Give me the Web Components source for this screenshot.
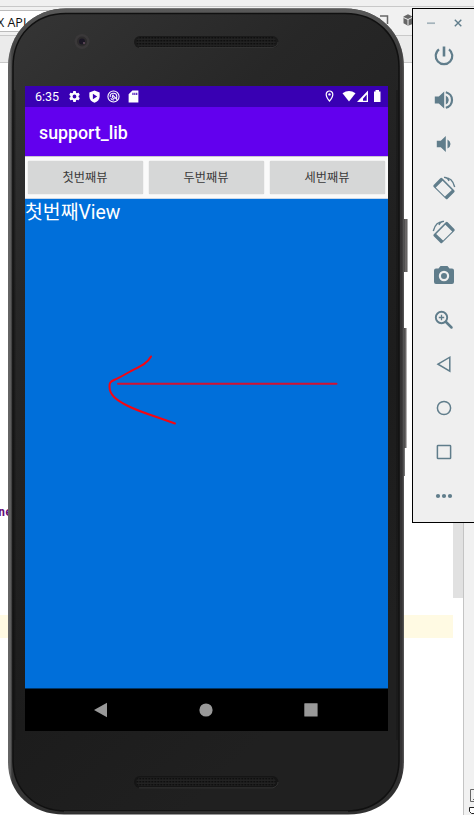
<!DOCTYPE html>
<html lang="ko">
<head>
<meta charset="utf-8">
<title>support_lib</title>
<style>
html,body{margin:0;height:100%;overflow:hidden;background:#fff}
body{font-family:Roboto,"Noto Sans CJK KR",sans-serif}
</style>
</head>
<body>
<desk-top>
  <ide-window slot="back"></ide-window>
  <phone-frame>
    <status-bar>6:35</status-bar>
    <app-bar>support_lib</app-bar>
    <button-row>
      <app-button>첫번째뷰</app-button>
      <app-button>두번째뷰</app-button>
      <app-button>세번째뷰</app-button>
    </button-row>
    <paint-view>첫번째View</paint-view>
    <nav-bar></nav-bar>
  </phone-frame>
  <emulator-panel slot="panel">
    <tool-icon name="power"></tool-icon>
    <tool-icon name="louder"></tool-icon>
    <tool-icon name="quieter"></tool-icon>
    <tool-icon name="left"></tool-icon>
    <tool-icon name="right"></tool-icon>
    <tool-icon name="camera"></tool-icon>
    <tool-icon name="zoom"></tool-icon>
    <tool-icon name="back"></tool-icon>
    <tool-icon name="home"></tool-icon>
    <tool-icon name="recent"></tool-icon>
    <tool-icon name="more"></tool-icon>
  </emulator-panel>
</desk-top>
<script>
function define(name, html) {
  customElements.define(name, class extends HTMLElement {
    constructor() {
      super();
      this.attachShadow({mode: "open"}).innerHTML = html;
    }
  });
}

// Overlapping windows placed on the desktop.
define("desk-top", `<style>
:host{display:block;position:relative;width:474px;height:815px;overflow:hidden}
::slotted(*){position:absolute}
.phone{position:absolute;left:8px;top:8px}
</style><slot name="back"></slot><div class="phone"><slot></slot></div><slot name="panel"></slot>`);

define("ide-window", `<style>
:host{display:flex;flex-direction:column;left:0;top:0;width:474px;height:815px;background:#fff;font:12px "Open Sans","Noto Sans",sans-serif;color:#111}
*{box-sizing:border-box}
.menu{height:7px;background:#f0f0f0;border-bottom:1px solid #c8c8c8;flex:none}
.tools{height:29px;background:#f1f1f1;border-bottom:1px solid #c9c9c9;display:flex;flex:none;padding-top:3px}
.combo{width:100px;height:22px;border:1px solid #bbb;border-left:0;background:#fff;font-size:12.500px;line-height:24px;white-space:nowrap;text-indent:-3px}
.tools svg{margin:2px 0 0 278px;flex:none}
.tabs{height:27px;background:#ebebeb;border-bottom:1px solid #c9c9c9;flex:none}
.body{flex:1;display:flex}
.code{flex:1;display:flex;flex-direction:column}
.word{margin-top:439px;height:20px;font:bold 12px/20px "DejaVu Sans Mono",monospace;color:#660e7a;text-indent:-2px}
.line{margin-top:93px;height:23px;background:#fffae3}
.scroll{width:10px;height:535px;background:#e1e1e1}
.side{width:11px;background:#f1f1f1;border-left:1px solid #c4c4c4;display:flex;align-items:flex-end}
</style><div class="menu"></div>
<div class="tools"><div class="combo">X API</div>
<svg width="40" height="20" viewBox="378 12 40 20"><path d="M380 16H387.500V24" fill="none" stroke="#666" stroke-width="1.500"/><path d="M403.500 16.500l4.500-2.300 4 2v8l-4 1.500-4.500-2.500z" fill="#666"/><path d="M403.500 17.500l4.500 2 4-2M408 19.500v6" stroke="#eee" fill="none"/></svg></div>
<div class="tabs"></div>
<div class="body"><div class="code"><div class="word">ne</div><div class="line"></div></div><div class="scroll"></div>
<div class="side"><svg width="10" height="28" viewBox="464 787 10 28"><path d="M476 789.500H470.500V801.500H476M473 799.500H476" fill="none" stroke="#666"/><path d="M474 807.500h-4.500v4l2 2h3" fill="#fff" stroke="#222"/></svg></div></div>`);

// Device casing: bevel, camera, speaker grilles and side keys around the screen.
define("phone-frame", `<style>
:host{display:block;position:relative;width:396px;height:807px}
.case{position:absolute;left:0;top:0;overflow:visible}
.screen{position:relative;width:363px;height:645px;margin-left:17px;top:78px;display:flex;flex-direction:column;background:#000}
</style>
<svg class="case" width="404" height="807" viewBox="8 8 404 807">
<defs><linearGradient id="g" x1="0" y1="0" x2=".45" y2="1"><stop offset="0" stop-color="#353535"/><stop offset=".3" stop-color="#272727"/><stop offset=".75" stop-color="#1c1c1c"/><stop offset="1" stop-color="#202020"/></linearGradient>
<linearGradient id="e" x1="0" x2="1"><stop offset="0" stop-color="#666"/><stop offset=".006" stop-color="#606060"/><stop offset=".01" stop-color="#383838"/><stop offset=".12" stop-color="#303030"/><stop offset=".985" stop-color="#303030"/><stop offset=".995" stop-color="#363435"/><stop offset="1" stop-color="#5c5c5c"/></linearGradient>
<linearGradient id="t" x1="0" y1="0" x2="0" y2="1"><stop offset="0" stop-color="#5a5a5a"/><stop offset=".05" stop-color="#555" stop-opacity=".4"/><stop offset=".15" stop-color="#555" stop-opacity="0"/></linearGradient>
<linearGradient id="k" x1="0" x2="1"><stop offset="0" stop-color="#444"/><stop offset=".5" stop-color="#716d6d"/><stop offset="1" stop-color="#555"/></linearGradient>
<pattern id="d" x="136.500" y="37" width="3" height="3" patternUnits="userSpaceOnUse"><rect width="3" height="3" fill="#222"/><rect width="1.500" height="1.500" fill="#080808"/></pattern></defs>
<path d="M404 219h3.500v53H404zM404 328h2.500v120H404zM404 448h.8v28h-.8z" fill="url(#k)"/>
<path id="o" d="M66 8.500H345C380 8.500 404 34 404 67V762C404 792 382 814.500 348 814.500H64C32 814.500 8 794 8 762V67C8 33 33 8.500 66 8.500z" fill="url(#e)"/>
<path d="M66 8.500H345C380 8.500 404 34 404 67V762C404 792 382 814.500 348 814.500H64C32 814.500 8 794 8 762V67C8 33 33 8.500 66 8.500z" fill="url(#t)"/>
<path d="M66 13.500H345C377 13.500 399 36 399 67V760C399 789 379 811 346 811H66C35 811 13 790 13 760V67C13 35 35 13.500 66 13.500z" fill="url(#g)" stroke="#101010" stroke-width="1.500"/>
<path d="M14.800 90V740M397 90V740" stroke="#111" opacity=".6"/>
<path d="M64 811.800H348" stroke="#404040" stroke-width=".8"/>
<circle cx="82" cy="41.500" r="7.500" fill="#3a3839"/><circle cx="82" cy="41.500" r="5" fill="#2d2b2c"/><circle cx="82" cy="41.500" r="3" fill="#1b1724"/><circle cx="84" cy="43" r="1" fill="#685061"/>
<rect x="134" y="36" width="144.500" height="12" rx="6" fill="#1a1a1a"/><path d="M139 47.500H273Q278 46 278 42" fill="none" stroke="#383838" stroke-width=".8"/><rect x="136.500" y="37" width="139" height="9.500" rx="4" fill="url(#d)"/>
<rect x="134" y="776" width="144.500" height="12" rx="6" fill="#151515"/><path d="M139 787.800H273Q278 786 278 782" fill="none" stroke="#3c3c3c" stroke-width=".8"/><rect x="136.500" y="777.500" width="139" height="8.500" rx="4" fill="url(#d)"/>
</svg>
<div class="screen"><slot></slot></div>`);

define("status-bar", `<style>
:host{display:flex;position:relative;align-items:center;height:21px;flex:none;background:#3900b3;color:#fff;font:12.500px/20px Roboto,sans-serif;padding:0 6px 0 10px}
.time{width:33px}
.gap{flex:1}
svg{display:block;fill:#fff;flex:none}
.i{width:13px;height:13px}
.l{display:flex;gap:6.500px}
.pin{position:absolute;left:300px;top:4px}
</style><span class="time"><slot></slot></span>
<div class="l">
<svg class="i" viewBox="0 0 24 24"><path fill-rule="evenodd" d="M19.400 13l.1-1-.1-1 2.100-1.600c.2-.2.200-.4.100-.6l-2-3.500c-.1-.2-.4-.3-.6-.2l-2.500 1-1.700-1L14.400 2.400 14 2h-4l-.4.400-.4 2.700-1.700 1-2.500-1c-.2-.1-.5 0-.6.200l-2 3.500c-.1.200-.1.400.1.600L4.600 11l-.1 1 .1 1-2.100 1.600c-.2.200-.2.400-.1.600l2 3.500c.1.200.4.300.6.200l2.500-1 1.700 1 .4 2.700.4.400h4l.4-.4.400-2.700 1.700-1 2.500 1c.2.100.5 0 .6-.2l2-3.500c.1-.2.100-.4-.1-.6zM12 15.500a3.500 3.500 0 110-7 3.500 3.500 0 010 7z"/></svg>
<svg class="i" viewBox="0 0 24 24"><path fill-rule="evenodd" d="M12 1L2.500 4.500V12c0 5.500 4 10 9.500 11.500 5.500-1.500 9.500-6 9.500-11.500V4.500zM9 7l8 5-8 5z"/></svg>
<svg class="i" viewBox="0 0 24 24" style="fill:none;stroke:#fff;stroke-width:2"><circle cx="12" cy="12" r="10.300"/><path d="M6 13a6 6 0 0112-2 7 7 0 01-1 5M10 9l9 9M12 9a3.500 3.500 0 00-1 6l3 1M7 15a6 6 0 006 3.500"/></svg>
<svg class="i" viewBox="0 0 24 24"><path fill-rule="evenodd" d="M10 1L3 8v15h18V1zM10 5h2v4h-2zM13.500 5h2v4h-2zM17 5h2v4h-2z"/></svg>
</div><span class="gap"></span>
<svg width="52" height="13" viewBox="330 90 52 13"><path d="M342.500 93.200q6.500-4.600 13 0L349 101.500z"/><path fill-rule="evenodd" d="M368 90.500V102H357zM366.700 94.500L363 98.700V100.700H366.700z"/><path d="M374 91.500h1.500V90h3.500v1.500h1.500V102H374z"/></svg>
<svg class="pin" width="9" height="12" viewBox="0 0 9 12"><path d="M4.500 1a3.300 3.300 0 00-3.300 3.400C1.200 7 4.500 11 4.500 11s3.300-4 3.300-6.600A3.300 3.300 0 004.500 1z" fill="none" stroke="#fff" stroke-width="1.200"/><circle cx="4.500" cy="4.400" r="1.200"/></svg>`);

define("app-bar", `<style>
:host{display:flex;align-items:center;height:49px;flex:none;background:#6200ee;color:#fff;padding:1px 14px 0;box-sizing:border-box;font:500 17.800px Roboto,sans-serif}
</style><slot></slot>`);

define("button-row", `<style>
:host{display:flex;gap:6px;height:43px;flex:none;box-sizing:border-box;background:#fafafa;border-top:1px solid #c9c6d2;border-bottom:1px solid #c8d6e8;padding:4px 3px}
::slotted(*){flex:1}
</style><slot></slot>`);

define("app-button", `<style>
:host{display:flex;align-items:center;justify-content:center;background:#d6d7d7;border-radius:1.500px;box-shadow:0 0 1px 0 #aaa;color:#3a3a3a;padding:2px 1px 0 0;box-sizing:border-box;font:12.200px/1 Roboto,"Noto Sans CJK KR",sans-serif}
</style><slot></slot>`);

define("paint-view", `<style>
:host{display:block;position:relative;flex:1;background:#006fda;color:#fff;font:19.400px/27px Roboto,"Noto Sans CJK KR",sans-serif}
svg{position:absolute;left:0;top:0}
</style><slot></slot>
<svg width="363" height="489" viewBox="25 199 363 489" fill="none" stroke="#f50611" stroke-width="2" stroke-linecap="round"><path d="M151 356.500C147 364 139 367 131 371C124 375 119 378 114 380C110 382 109.300 383 109.500 387C109.700 395 116 400 128 406C142 413 158 417 175 423.500"/><path d="M118 383.700H336.500" stroke="#d31232"/></svg>`);

define("nav-bar", `<style>
:host{display:grid;grid-template-columns:repeat(3,105px);justify-content:center;align-items:center;justify-items:center;height:43px;padding:0 2px 1px 0;box-sizing:border-box;border-top:1px solid #003464;flex:none;background:#000}
svg{display:block;fill:#999}
</style><svg width="14" height="16"><path d="M0 8L13 .7V15.300z"/></svg><svg width="14" height="14"><circle cx="7" cy="7" r="6.600"/></svg><svg width="14" height="14"><rect x=".3" y=".3" width="13.300" height="13.300" rx=".5"/></svg>`);

define("emulator-panel", `<style>
:host{display:flex;flex-direction:column;left:412px;top:8px;width:64px;height:515px;box-sizing:border-box;border:1px solid #000;background:#efefef}
.head{height:25px;flex:none;display:flex;gap:19px;padding:9px 0 0 14px;box-sizing:border-box}
svg{display:block;fill:none;stroke:#607d8b}
</style><div class="head"><svg width="8" height="10"><path d="M0 5.200H8" stroke="#a4b3bb" stroke-width="1.700"/></svg><svg width="8" height="10"><path d="M.8 1.800l6.500 6.500M7.300 1.800L.8 8.300" stroke-width="1.400"/></svg></div><slot></slot>`);

const card = '<path class="f" fill-rule="evenodd" d="M8.300 2.300Q9.300 1.300 10.300 2.300L22.200 14.200Q23.200 15.200 22.200 16.200L15.700 22.800Q14.700 23.800 13.700 22.800L1.700 11Q.7 10 1.700 9zM10.600 4.700L3.800 11.500 12.900 20.600 19.800 13.900z"/><path d="M12 1.400Q20.500 1.500 22.700 11M12 1.500q3.500-.6 5 3.500" stroke-width="1.400"/>';
const glyphs = {
  power: '<path d="M12 2.500v10" stroke-width="2.600"/><path d="M7 5.300a8.300 8.300 0 1010 0" stroke-width="2.200"/>',
  louder: '<path class="f" d="M2.800 8.500h4l5.400-5v17l-5.400-5h-4z"/><path class="f" d="M13.800 7.500q3 1.700 3 4.500t-3 4.500z"/><path d="M13.800 4.200a8 8 0 010 15.600" stroke-width="2.200"/>',
  quieter: '<path class="f" d="M4.800 8.700h4l5-4.800v16.200l-5-4.800h-4z"/><path class="f" d="M15.500 7.500q3 1.600 3 4.500t-3 4.500z"/>',
  left: card,
  right: '<g transform="matrix(-1 0 0 1 24 0)">' + card + '</g>',
  camera: '<path class="f" fill-rule="evenodd" d="M8.500 2h7l2 2.500H20q2 0 2 2V18q0 2-2 2H4q-2 0-2-2V6.500q0-2 2-2h2.500zM12 6.800a5.200 5.200 0 100 10.400 5.200 5.200 0 000-10.400zm0 2.200a3 3 0 110 6 3 3 0 010-6z"/>',
  zoom: '<circle cx="9.500" cy="9.500" r="5.700" stroke-width="1.900"/><path d="M9.500 6.800v5.400M6.800 9.500h5.400" stroke-width="1.300"/><path d="M14 14l5.500 5.500" stroke-width="2.500" stroke-linecap="round"/>',
  back: '<path d="M6 12.200L17.800 5.200v14z" stroke-width="1.500"/>',
  home: '<circle cx="12" cy="12" r="6.600" stroke-width="1.500"/>',
  recent: '<rect x="5.400" y="5.400" width="13.200" height="13.200" rx=".7" stroke-width="1.500"/>',
  more: '<circle class="f" cx="6" cy="12" r="2.100"/><circle class="f" cx="12" cy="12" r="2.100"/><circle class="f" cx="18" cy="12" r="2.100"/>'
};
customElements.define("tool-icon", class extends HTMLElement {
  constructor() {
    super();
    this.attachShadow({mode: "open"});
  }
  connectedCallback() {
    this.shadowRoot.innerHTML = `<style>
:host{display:flex;height:44px;flex:none;align-items:center;justify-content:center}
svg{fill:none;stroke:#607d8b}.f{fill:#607d8b;stroke:none}
</style><svg width="24" height="24" viewBox="0 0 24 24">${glyphs[this.getAttribute("name")]}</svg>`;
  }
});
</script>
</body>
</html>
